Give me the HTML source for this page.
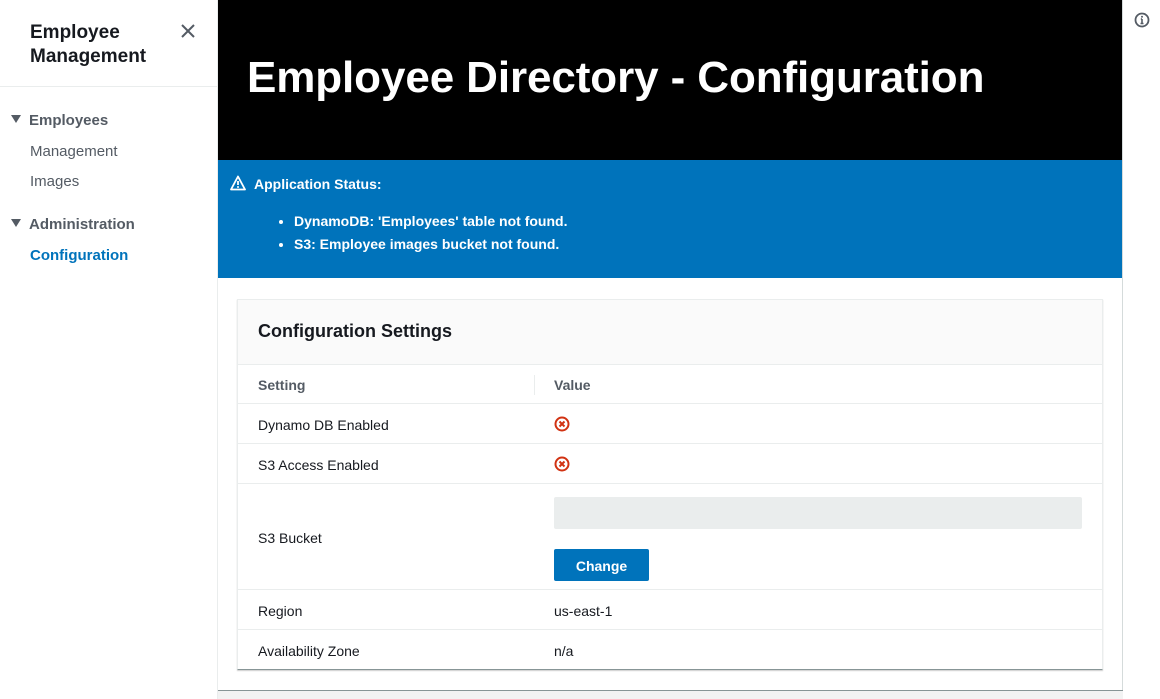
<!DOCTYPE html>
<html><head><meta charset="utf-8"><style>
*{margin:0;padding:0;box-sizing:border-box}
body{width:1160px;height:699px;overflow:hidden;background:#fff;font-family:"Liberation Sans",sans-serif;color:#16191f;position:relative}
.side{position:absolute;left:0;top:0;width:218px;height:699px;border-right:1px solid #eaeded;background:#fff}
.side h2{position:absolute;left:30px;top:21px;font-size:19px;line-height:24px;font-weight:bold;color:#16191f}
.close{position:absolute;left:180px;top:23px}
.hr{position:absolute;left:0;top:86px;width:218px;border-top:1px solid #eaeded}
.sec{position:absolute;left:11px;font-size:15px;font-weight:bold;color:#545b64}
.sec:before{content:"";display:inline-block;border-left:5px solid transparent;border-right:5px solid transparent;border-top:8px solid #545b64;margin-right:8px;vertical-align:2px}
.lnk{position:absolute;left:30px;font-size:15px;color:#545b64}
.main{position:absolute;left:218px;top:0;width:905px;height:699px;border-right:1px solid #d5dbdb}
.hdr{height:160px;background:#000;color:#fff;font-size:44px;font-weight:bold;padding:53px 0 0 29px;letter-spacing:-0.1px}
.ban{height:118px;background:#0073bb;color:#fff;font-weight:bold;font-size:14px;position:relative}
.card{position:absolute;left:19px;top:299px;width:866px;height:371px;border:1px solid #eaeded;border-bottom:1px solid #879596;box-shadow:0 1px 1px rgba(0,0,0,.2)}
.ch{height:65px;background:#fafafa;border-bottom:1px solid #eaeded;font-size:18px;font-weight:bold;padding:21px 0 0 20px}
.row{position:relative;border-bottom:1px solid #eaeded;font-size:14px}
.row .a{position:absolute;left:20px}
.row .b{position:absolute;left:316px}
.foot{position:absolute;left:0;top:690px;width:905px;height:9px;background:#f2f3f3;border-top:1px solid #879596}
</style></head><body>
<div class="side">
<h2>Employee<br>Management</h2>
<svg class="close" width="16" height="16" viewBox="0 0 16 16"><path d="M2 2L14 14M14 2L2 14" stroke="#545b64" stroke-width="2"/></svg>
<div class="hr"></div>
<div class="sec" style="top:112px">Employees</div>
<div class="lnk" style="top:143px">Management</div>
<div class="lnk" style="top:173px">Images</div>
<div class="sec" style="top:216px">Administration</div>
<div class="lnk" style="top:247px;color:#0073bb;font-weight:bold">Configuration</div>
</div>
<div class="main">
<div class="hdr">Employee Directory - Configuration</div>
<div class="ban">
<svg style="position:absolute;left:12px;top:15px" width="16" height="16" viewBox="0 0 16 16"><path d="M8 1.5L15 14.5H1Z" fill="none" stroke="#fff" stroke-width="1.8" stroke-linejoin="round"/><path d="M8 6v4" stroke="#fff" stroke-width="1.8"/><circle cx="8" cy="12" r="1" fill="#fff"/></svg>
<div style="position:absolute;left:36px;top:16px">Application Status:</div>
<ul style="position:absolute;left:76px;top:50px;line-height:23px">
<li>DynamoDB: 'Employees' table not found.</li>
<li>S3: Employee images bucket not found.</li></ul>
</div>
<div class="card">
<div class="ch">Configuration Settings</div>
<div class="row" style="height:39px;font-weight:bold;color:#545b64"><span class="a" style="top:12px">Setting</span><span style="position:absolute;left:296px;top:10px;height:20px;border-left:1px solid #eaeded"></span><span class="b" style="top:12px">Value</span></div>
<div class="row" style="height:40px"><span class="a" style="top:13px">Dynamo DB Enabled</span><svg class="b" style="top:12px" width="16" height="16" viewBox="0 0 16 16"><circle cx="8" cy="8" r="6.5" fill="none" stroke="#d13212" stroke-width="2"/><path d="M5.5 5.5l5 5M10.5 5.5l-5 5" stroke="#d13212" stroke-width="2"/></svg></div>
<div class="row" style="height:40px"><span class="a" style="top:13px">S3 Access Enabled</span><svg class="b" style="top:12px" width="16" height="16" viewBox="0 0 16 16"><circle cx="8" cy="8" r="6.5" fill="none" stroke="#d13212" stroke-width="2"/><path d="M5.5 5.5l5 5M10.5 5.5l-5 5" stroke="#d13212" stroke-width="2"/></svg></div>
<div class="row" style="height:106px"><span class="a" style="top:46px">S3 Bucket</span>
<div style="position:absolute;left:316px;top:13px;width:528px;height:32px;background:#eaeded;border-radius:2px"></div>
<div style="position:absolute;left:316px;top:65px;width:95px;height:32px;background:#0073bb;color:#fff;font-weight:bold;text-align:center;line-height:34px;border-radius:2px">Change</div></div>
<div class="row" style="height:40px"><span class="a" style="top:13px">Region</span><span class="b" style="top:13px">us-east-1</span></div>
<div class="row" style="height:40px;border-bottom:none"><span class="a" style="top:13px">Availability Zone</span><span class="b" style="top:13px">n/a</span></div>
</div>
<div class="foot"></div>
</div>
<svg style="position:absolute;left:1134px;top:12px" width="16" height="16" viewBox="0 0 16 16"><circle cx="8" cy="8" r="6.5" fill="none" stroke="#545b64" stroke-width="1.8"/><path d="M8 7v4.5M6.5 11.5h3M6.8 7H8" stroke="#545b64" stroke-width="1.6"/><circle cx="8" cy="4.8" r="1" fill="#545b64"/></svg>
</body></html>
